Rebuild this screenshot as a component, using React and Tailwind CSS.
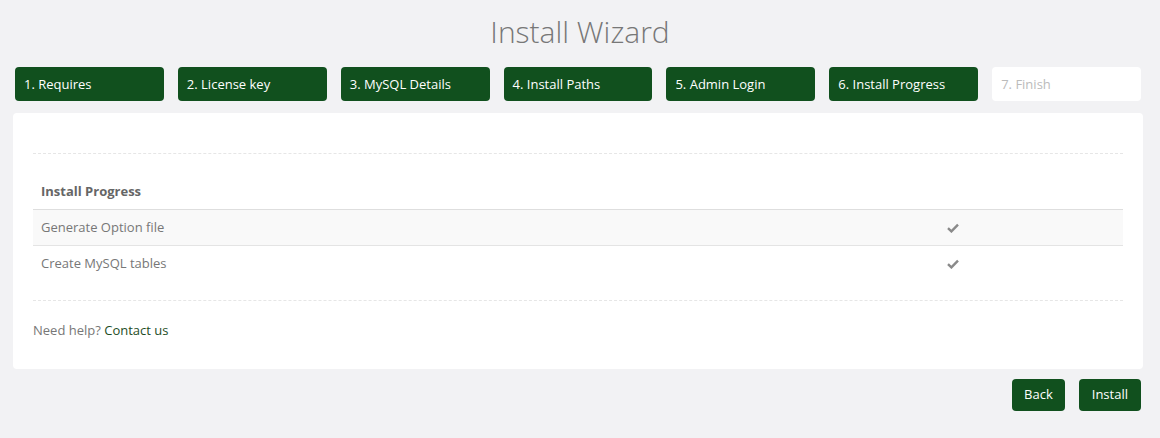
import React from "react";

const steps = [
  "1. Requires",
  "2. License key",
  "3. MySQL Details",
  "4. Install Paths",
  "5. Admin Login",
  "6. Install Progress",
  "7. Finish",
];

const tasks = ["Generate Option file", "Create MySQL tables"];

const CheckIcon = () => (
  <svg width="12" height="10" viewBox="0 0 12 10" className="block">
    <path d="M1 5.2 L4.4 8.4 L11 1.6" fill="none" stroke="#8a8a8a" strokeWidth="2.4" />
  </svg>
);

const App = () => {
  return (
    <div
      className="w-[1160px] h-[438px] bg-[#f2f2f4] text-[13px] text-[#777]"
      style={{ fontFamily: '"Open Sans", "Liberation Sans", sans-serif' }}
    >
      <h1 className="pt-[12px] h-[67px] text-center text-[30px] font-light leading-[40px] text-[#777]">
        Install Wizard
      </h1>

      <div className="flex gap-[14px] px-[15px] pr-[19px]">
        {steps.map((step, i) => (
          <div
            key={step}
            className={`flex-1 h-[34px] rounded-[4px] flex items-center pl-[9px] pt-[1px] ${
              i < 6 ? "bg-[#11501e] text-white" : "bg-white text-[#bbb]"
            }`}
          >
            {step}
          </div>
        ))}
      </div>

      <div className="ml-[13px] mr-[17px] mt-[12px] h-[256px] bg-white rounded-[4px] px-[20px] pt-[40px]">
        <div className="border-t border-dashed border-[#e6e6e6]" />

        <div className="mt-[21px]">
          <div className="h-[35px] flex items-center px-[8px] font-bold text-[#666] border-b border-[#dedede]">
            Install Progress
          </div>
          {tasks.map((task, i) => (
            <div
              key={task}
              className={`h-[36px] grid grid-cols-[1fr_171px] items-center px-[8px] ${
                i === 0 ? "bg-[#f9f9f9] border-b border-[#e4e4e4]" : ""
              }`}
            >
              <span>{task}</span>
              <span className="pl-[3px]">
                <CheckIcon />
              </span>
            </div>
          ))}
        </div>

        <div className="mt-[18px] border-t border-dashed border-[#e6e6e6]" />

        <p className="mt-[20px]">
          Need help? <a className="text-[#1e4d26]">Contact us</a>
        </p>
      </div>

      <div className="flex justify-end gap-[14px] pr-[19px] mt-[10px]">
        <button className="h-[32px] px-[12px] rounded-[4px] bg-[#11501e] text-white">
          Back
        </button>
        <button className="h-[32px] px-[13px] rounded-[4px] bg-[#11501e] text-white">
          Install
        </button>
      </div>
    </div>
  );
};

export default App;
